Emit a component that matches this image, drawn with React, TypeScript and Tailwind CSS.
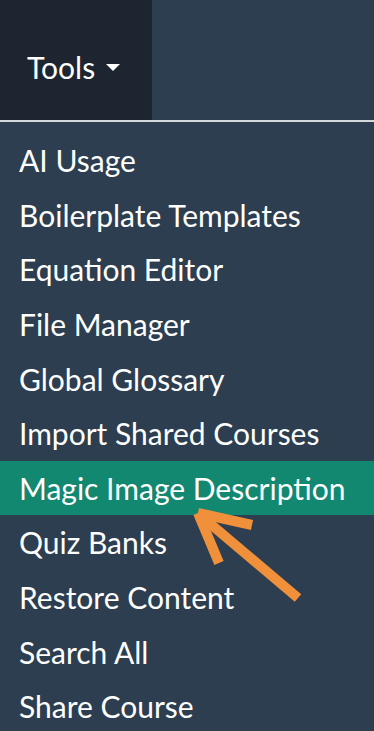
const items = [
  'AI Usage',
  'Boilerplate Templates',
  'Equation Editor',
  'File Manager',
  'Global Glossary',
  'Import Shared Courses',
  'Magic Image Description',
  'Quiz Banks',
  'Restore Content',
  'Search All',
  'Share Course',
];

export default function App() {
  return (
    <div
      className="relative w-[374px] h-[731px] overflow-hidden bg-[#2c3e50] text-white"
      style={{ fontFamily: 'Lato, "Open Sans", sans-serif' }}
    >
      {/* Top nav */}
      <div className="flex h-[120px]">
        <div className="flex w-[152px] items-center bg-[#1c2530] pl-[27px] pt-[13px]">
          <span className="text-[30px] leading-none">Tools</span>
          <svg className="ml-[11px] mt-[3px]" width="14" height="8" viewBox="0 0 14 8">
            <path d="M0 0 L14 0 L7 7 Z" fill="#ffffff" />
          </svg>
        </div>
        <div className="flex-1" />
      </div>
      <div className="h-[2px] bg-[#d4d8dc]" />

      {/* Dropdown */}
      <ul className="pt-[11px]">
        {items.map((item) => (
          <li
            key={item}
            className={
              'flex h-[54.6px] items-center pl-[19px] text-[30px] leading-none ' +
              (item === 'Magic Image Description' ? 'bg-[#128870]' : '')
            }
          >
            {item}
          </li>
        ))}
      </ul>

      {/* Annotation arrow */}
      <svg className="absolute left-0 top-0" width="374" height="731" viewBox="0 0 374 731">
        <g stroke="#f0903a" strokeWidth="10" strokeLinecap="butt" fill="none">
          <line x1="201" y1="516" x2="298" y2="598" />
          <line x1="198" y1="513" x2="252" y2="525" />
          <line x1="198" y1="513" x2="219" y2="563" />
        </g>
      </svg>
    </div>
  );
}
